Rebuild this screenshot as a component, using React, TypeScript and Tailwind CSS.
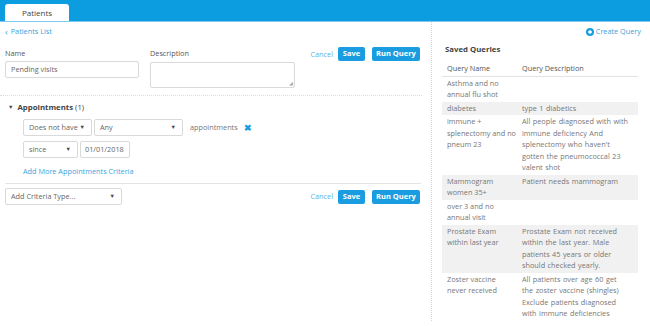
const QUERIES = [
  { name: "Asthma and no annual flu shot", desc: "" },
  { name: "diabetes", desc: "type 1 diabetics" },
  {
    name: "immune + splenectomy and no pneum 23",
    desc: "All people diagnosed with with immune deficiency And splenectomy who haven't gotten the pneumococcal 23 valent shot",
  },
  { name: "Mammogram women 35+", desc: "Patient needs mammogram" },
  { name: "over 3 and no annual visit", desc: "" },
  {
    name: "Prostate Exam within last year",
    desc: "Prostate Exam not received within the last year. Male patients 45 years or older should checked yearly.",
  },
  {
    name: "Zoster vaccine never received",
    desc: "All patients over age 60 get the zoster vaccine (shingles) Exclude patients diagnosed with immune deficiencies",
  },
];

function Caret() {
  return <span className="text-[5.5px] leading-none text-[#444]">▼</span>;
}

function Select({ label, className }: { label: string; className: string }) {
  return (
    <div
      className={`flex h-[17px] items-center justify-between whitespace-nowrap rounded-[2px] border border-[#d9d9d9] bg-white pl-[5px] pr-[6px] text-[#666] ${className}`}
    >
      <span>{label}</span>
      <Caret />
    </div>
  );
}

function Actions() {
  return (
    <div className="flex items-center">
      <span className="mr-[5px] text-[#5ab4e6]">Cancel</span>
      <button className="h-[14px] w-[27px] rounded-[2px] bg-[#1a9de0] text-[7.5px] font-bold leading-none text-white">
        Save
      </button>
      <button className="ml-[7px] h-[14px] w-[48px] rounded-[2px] bg-[#1a9de0] text-[7.5px] font-bold leading-none text-white">
        Run Query
      </button>
    </div>
  );
}

export default function App() {
  return (
    <div className="h-[326px] w-[650px] overflow-hidden bg-white font-['Open_Sans',sans-serif] text-[7.3px] leading-[11px] text-[#555]">
      <div className="flex h-[22px] items-end border-b border-[#7fc8ef] bg-[#0c9ce0] pl-[5px]">
        <div className="flex h-[17px] w-[64px] items-center justify-center rounded-t-[3px] bg-white text-[8px] text-[#444]">
          Patients
        </div>
      </div>

      <div className="flex">
        <div className="w-[432px] border-r border-dotted border-[#d6d6d6]">
          <div className="flex items-center pl-[5px] pt-[4px] text-[#3aa3dd]">
            <span className="mr-[3px] text-[9px] leading-none">‹</span>
            Patients List
          </div>

          <div className="flex pl-[5px] pr-[11px] pt-[11px]">
            <div className="w-[134px]">
              <div className="text-[#555]">Name</div>
              <div className="mt-[2px] flex h-[17px] items-center rounded-[2px] border border-[#d9d9d9] pl-[5px] text-[#666]">
                Pending visits
              </div>
            </div>
            <div className="ml-[11px] w-[145px]">
              <div className="text-[#555]">Description</div>
              <div className="relative mt-[3px] h-[26px] rounded-[2px] border border-[#d9d9d9]">
                <span className="absolute bottom-[1px] right-[1px] text-[5px] leading-none text-[#aaa]">◢</span>
              </div>
            </div>
            <div className="ml-auto -mt-[1px]">
              <Actions />
            </div>
          </div>

          <div className="mt-[7px] mr-[9px] border-t border-dotted border-[#dcdcdc]" />

          <div className="flex items-center gap-[4px] pl-[8px] pt-[6px]">
            <Caret />
            <span className="text-[7.8px] text-[#444]">
              <span className="font-bold">Appointments</span> (1)
            </span>
          </div>

          <div className="pl-[23px] pt-[6px]">
            <div className="flex items-center">
              <Select label="Does not have" className="w-[69px]" />
              <Select label="Any" className="ml-[2px] w-[89px]" />
              <span className="ml-[7px] text-[#777]">appointments</span>
              <span className="ml-[6px] text-[9px] font-bold leading-none text-[#1a9de0]">✖</span>
            </div>
            <div className="mt-[5px] flex items-center">
              <Select label="since" className="w-[55px]" />
              <div className="ml-[2px] flex h-[17px] w-[50px] items-center rounded-[2px] border border-[#d9d9d9] pl-[4px] text-[#666]">
                01/01/2018
              </div>
            </div>
            <div className="mt-[8px] text-[#3aa3dd]">Add More Appointments Criteria</div>
          </div>

          <div className="ml-[5px] mr-[10px] mt-[6px] border-t border-[#e3e3e3]" />

          <div className="flex items-center justify-between pl-[5px] pr-[11px] pt-[4px]">
            <Select label="Add Criteria Type..." className="w-[117px]" />
            <Actions />
          </div>
        </div>

        <div className="flex-1 pl-[10px] pr-[9px]">
          <div className="flex items-center justify-end pt-[4px] text-[#3aa3dd]">
            <svg width="8" height="8" viewBox="0 0 16 16" className="mr-[2px]">
              <circle cx="8" cy="8" r="8" fill="#1a9de0" />
              <path d="M8 4v8M4 8h8" stroke="white" strokeWidth="2.6" />
            </svg>
            Create Query
          </div>
          <div className="mt-[7px] pl-[3px] text-[7.8px] font-bold text-[#444]">Saved Queries</div>
          <table className="mt-[6px] w-[196px] table-fixed border-collapse leading-[11.5px]">
            <colgroup>
              <col className="w-[76px]" />
              <col className="w-[120px]" />
            </colgroup>
            <thead>
              <tr className="border-b border-[#e3e3e3]">
                <th className="py-[1.5px] pl-[5px] pr-[1.4px] text-left font-normal text-[#555]">Query Name</th>
                <th className="py-[1.5px] pl-[4px] pr-[9px] text-left font-normal text-[#555]">Query Description</th>
              </tr>
            </thead>
            <tbody>
              {QUERIES.map((q, i) => (
                <tr key={q.name} className={i % 2 === 1 ? "bg-[#f1f1f1]" : ""}>
                  <td className="py-[1px] pl-[5px] pr-[1.4px] align-top text-[#777]">{q.name}</td>
                  <td className="py-[1px] pl-[4px] pr-[9px] align-top text-[#777] [word-spacing:0.6px]">{q.desc}</td>
                </tr>
              ))}
            </tbody>
          </table>
        </div>
      </div>
    </div>
  );
}
